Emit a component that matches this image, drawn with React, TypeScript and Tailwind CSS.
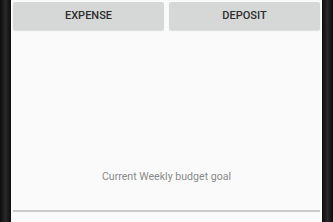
export default function App() {
  return (
    <div className="w-[333px] h-[222px] flex bg-[#111]" style={{ fontFamily: 'Roboto, "Liberation Sans", sans-serif' }}>
      <div className="w-[11px] h-full bg-gradient-to-r from-[#0c0c0c] via-[#2a2a2a] to-[#0c0c0c]" />
      <div className="flex-1 h-full bg-[#fafafa] flex flex-col px-[2px]">
        <div className="flex gap-[5px] pt-[2px]">
          <div className="flex-1 h-[28px] bg-[#d6d7d7] rounded-[2px] shadow-[0_1px_1px_rgba(0,0,0,0.12)] flex items-center justify-center text-[11px] font-medium text-[#2e2e2e]">EXPENSE</div>
          <div className="flex-1 h-[28px] bg-[#d6d7d7] rounded-[2px] shadow-[0_1px_1px_rgba(0,0,0,0.12)] flex items-center justify-center text-[11px] font-medium text-[#2e2e2e]">DEPOSIT</div>
        </div>
        <div className="mt-[140px] text-center text-[10.6px] text-[#8a8a8a] leading-[14px]">Current Weekly budget goal</div>
        <div className="mt-[26px] h-[2px] bg-[#c9c9c9]" />
      </div>
      <div className="w-[11px] h-full bg-gradient-to-r from-[#0c0c0c] via-[#2a2a2a] to-[#0c0c0c]" />
    </div>
  );
}
